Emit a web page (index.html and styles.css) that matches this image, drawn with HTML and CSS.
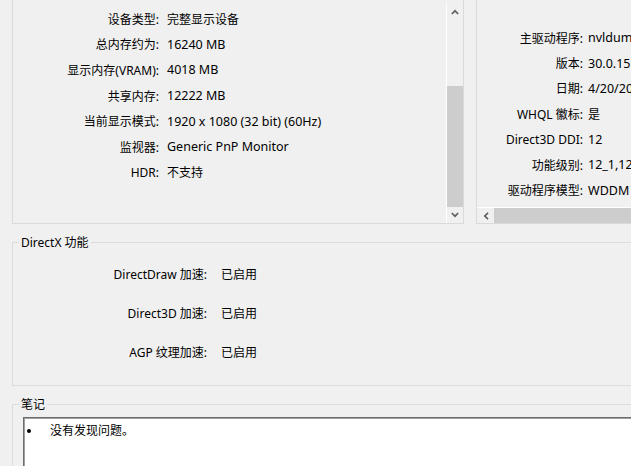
FILE: index.html
```html
<!DOCTYPE html>
<html lang="zh-CN">
<head>
<meta charset="utf-8">
<title>DirectX 诊断工具</title>
<link rel="stylesheet" href="styles.css">
</head>
<body>
<div class="top">
  <div class="panel left-panel">
    <div class="list list-left">
      <div class="row"><span class="lbl">设备类型:</span><span class="val">完整显示设备</span></div>
      <div class="row"><span class="lbl">总内存约为:</span><span class="val lat">16240 MB</span></div>
      <div class="row"><span class="lbl">显示内存(VRAM):</span><span class="val lat">4018 MB</span></div>
      <div class="row"><span class="lbl">共享内存:</span><span class="val lat">12222 MB</span></div>
      <div class="row"><span class="lbl">当前显示模式:</span><span class="val lat">1920 x 1080 (32 bit) (60Hz)</span></div>
      <div class="row"><span class="lbl">监视器:</span><span class="val lat">Generic PnP Monitor</span></div>
      <div class="row"><span class="lbl">HDR:</span><span class="val">不支持</span></div>
    </div>
    <div class="vscroll">
      <div class="vbtn up"><svg width="8" height="6" viewBox="0 0 8 6"><polyline points="0.8,5 4,1.8 7.2,5" fill="none" stroke="#606060" stroke-width="1.7"/></svg></div>
      <div class="track"><div class="thumb"></div></div>
      <div class="vbtn down"><svg width="8" height="6" viewBox="0 0 8 6"><polyline points="0.8,1 4,4.2 7.2,1" fill="none" stroke="#606060" stroke-width="1.7"/></svg></div>
    </div>
  </div>
  <div class="panel right-panel">
    <div class="list list-right">
      <div class="row"><span class="lbl">主驱动程序:</span><span class="val lat">nvldumdx.dll,nvldumdx.dll,nvldumdx.dll</span></div>
      <div class="row"><span class="lbl">版本:</span><span class="val lat">30.0.15.1277</span></div>
      <div class="row"><span class="lbl">日期:</span><span class="val lat">4/20/2022 8:00:00 AM</span></div>
      <div class="row"><span class="lbl">WHQL 徽标:</span><span class="val">是</span></div>
      <div class="row"><span class="lbl">Direct3D DDI:</span><span class="val lat">12</span></div>
      <div class="row"><span class="lbl">功能级别:</span><span class="val lat">12_1,12_0,11_1,11_0,10_1,10_0</span></div>
      <div class="row"><span class="lbl">驱动程序模型:</span><span class="val lat">WDDM 3.0</span></div>
    </div>
    <div class="hscroll">
      <div class="hbtn"><svg width="6" height="8" viewBox="0 0 6 8"><polyline points="5,0.8 1.8,4 5,7.2" fill="none" stroke="#606060" stroke-width="1.7"/></svg></div>
      <div class="hthumb"></div>
    </div>
  </div>
</div>
<fieldset class="group dx">
  <legend>DirectX 功能</legend>
  <div class="feat-list">
    <div class="feat-row"><span class="flbl">DirectDraw 加速:</span><span class="fval">已启用</span></div>
    <div class="feat-row"><span class="flbl">Direct3D 加速:</span><span class="fval">已启用</span></div>
    <div class="feat-row"><span class="flbl">AGP 纹理加速:</span><span class="fval">已启用</span></div>
  </div>
</fieldset>
<fieldset class="group notes">
  <legend>笔记</legend>
  <div class="notebox">
    <div class="note-item"><span class="bullet"><span class="dot"></span></span><span>没有发现问题。</span></div>
  </div>
</fieldset>
</body>
</html>
```
FILE: styles.css
```css
html, body {
  margin: 0;
  padding: 0;
}
body {
  width: 631px;
  height: 466px;
  overflow: hidden;
  background: #f0f0f0;
  color: #000;
  font-family: "Noto Sans", "Noto Sans CJK SC", sans-serif;
  font-size: 12px;
}
.lat {
  font-size: 12.5px;
}
.top {
  display: flex;
  height: 224px;
  padding-left: 12px;
  gap: 12px;
}
.panel {
  box-sizing: border-box;
  border: 1px solid #dadada;
  border-top: none;
  display: flex;
  overflow: hidden;
}
.left-panel {
  flex: 0 0 452px;
}
.right-panel {
  flex: 0 0 220px;
  flex-direction: column;
}
.list {
  flex: 1;
  min-width: 0;
  overflow: hidden;
}
.list-left {
  padding-top: 6px;
}
.list-right {
  padding-top: 25px;
}
.row {
  display: flex;
  align-items: center;
  white-space: nowrap;
}
.list-left .row {
  height: 25.6px;
}
.list-right .row {
  height: 25.4px;
}
.lbl {
  flex: none;
  text-align: right;
}
.list-left .lbl {
  width: 146px;
  margin-right: 8px;
}
.list-right .lbl {
  width: 106px;
  margin-right: 5px;
}
.vscroll {
  box-sizing: border-box;
  flex: 0 0 17px;
  margin-top: 3px;
  border-left: 1px solid #ffffff;
  display: flex;
  flex-direction: column;
}
.vbtn {
  display: flex;
  align-items: center;
  justify-content: center;
}
.vbtn.up {
  height: 17px;
}
.vbtn.down {
  height: 16px;
}
.track {
  flex: 1;
}
.thumb {
  margin-top: 66px;
  height: 121px;
  background: #cdcdcd;
}
.hscroll {
  box-sizing: border-box;
  height: 16px;
  border-top: 1px solid #ffffff;
  display: flex;
  flex: none;
}
.hbtn {
  flex: 0 0 17px;
  display: flex;
  align-items: center;
  justify-content: center;
}
.hthumb {
  flex: 1;
  background: #cdcdcd;
}
.group {
  margin: 10px 0 0 12px;
  padding: 0;
  width: 700px;
  min-width: 0;
  border: 1px solid #dcdcdc;
  box-sizing: border-box;
}
.group legend {
  margin-left: 6px;
  padding: 0 2px;
  line-height: 17px;
  font-size: 12px;
}
.dx {
  padding-bottom: 14px;
}
.feat-list {
  padding-top: 4px;
}
.feat-row {
  display: flex;
  align-items: center;
  height: 38.7px;
  white-space: nowrap;
}
.flbl {
  width: 194px;
  margin-right: 14px;
  text-align: right;
}
.notebox {
  margin: 4px 0 0 10px;
  height: 120px;
  background: #ffffff;
  border-top: 1px solid #6d6d6d;
  border-left: 1px solid #6d6d6d;
  box-shadow: inset 1px 1px 0 #a0a0a0;
  padding: 4px 0 0 3px;
}
.note-item {
  display: flex;
  align-items: center;
  line-height: 17px;
}
.bullet {
  width: 23px;
  flex: none;
  display: flex;
  align-items: center;
}
.dot {
  width: 4px;
  height: 4px;
  border-radius: 50%;
  background: #000;
}
```
